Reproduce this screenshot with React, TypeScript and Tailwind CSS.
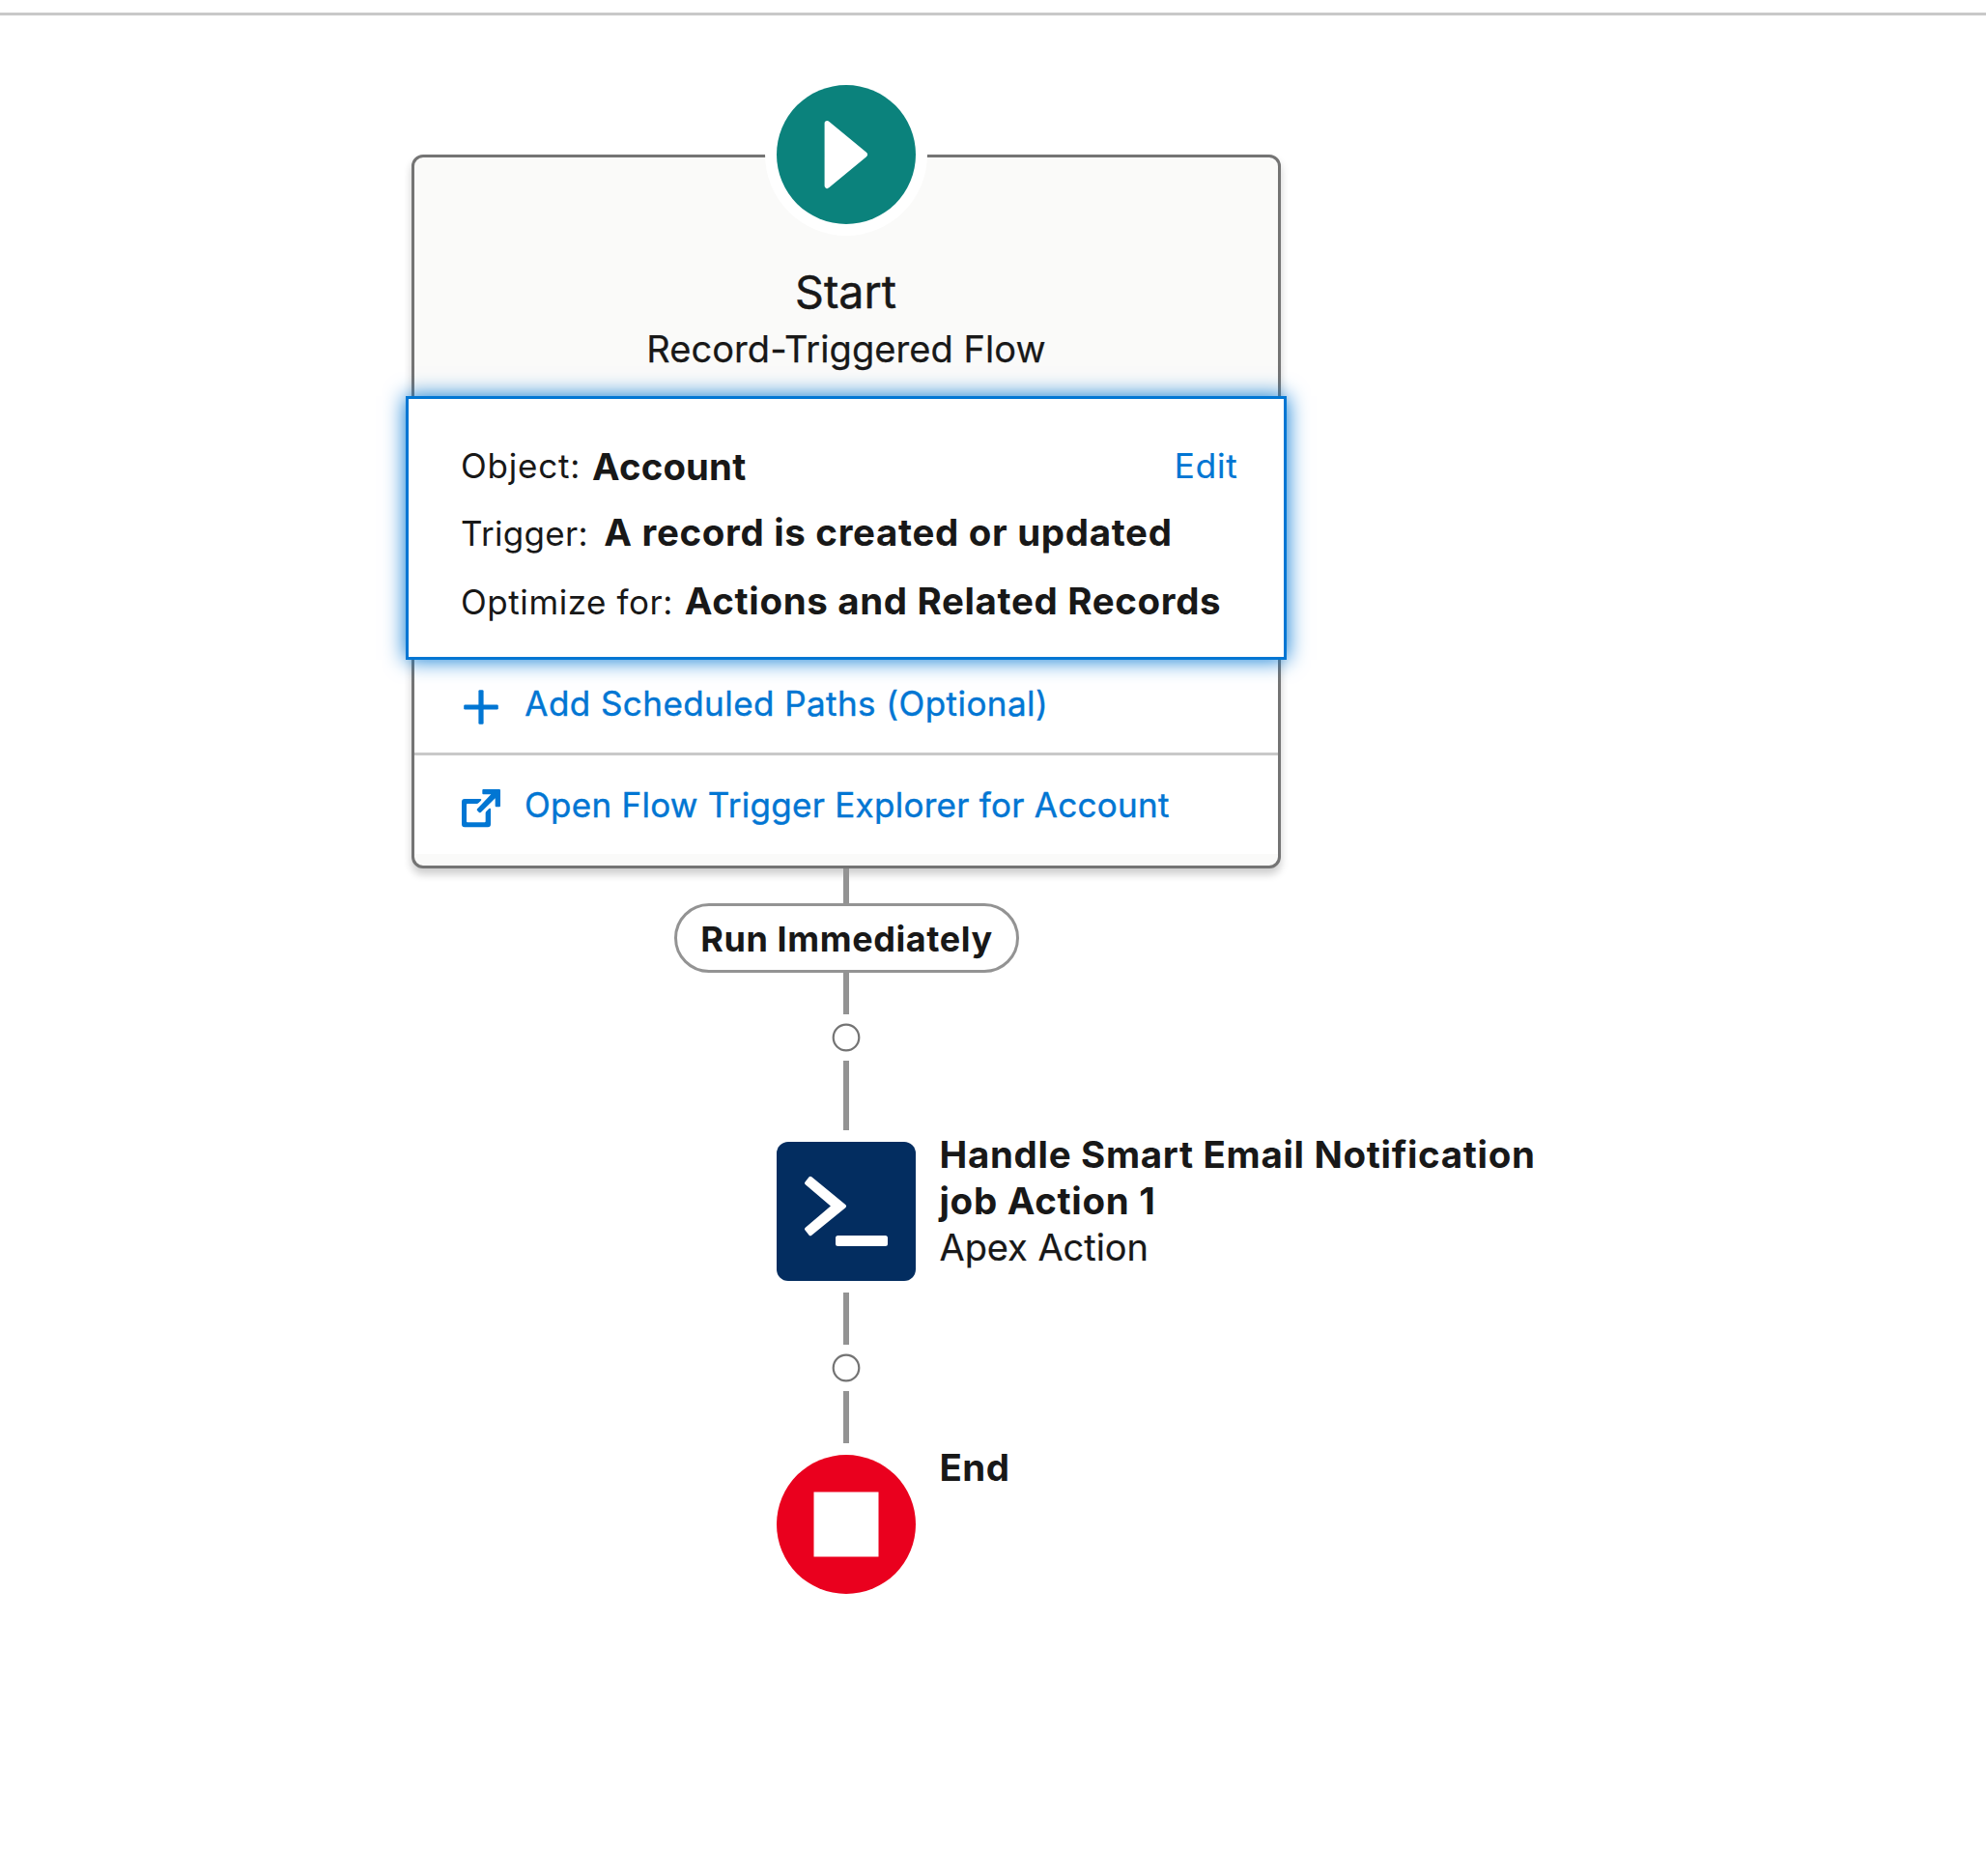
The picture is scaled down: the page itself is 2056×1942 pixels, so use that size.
import React from "react";

function Connector({ className }: { className: string }) {
  return <div className={`w-[6px] bg-[#939393] ${className}`} />;
}

function AddDot() {
  return (
    <svg className="block h-[48px] w-[48px]" viewBox="0 0 48 48">
      <circle cx="24" cy="24" r="13.3" fill="#fff" stroke="#747474" strokeWidth="2.2" />
    </svg>
  );
}

function PlayIcon() {
  return (
    <svg className="block h-[144px] w-[144px]" viewBox="0 0 144 144">
      <circle cx="72" cy="72" r="72" fill="#0b827c" />
      <path d="M52.4 39.8 91.2 72 52.4 104.2Z" fill="#fff" stroke="#fff" strokeWidth="5.6" strokeLinejoin="round" />
    </svg>
  );
}

function ApexIcon() {
  return (
    <svg className="block h-[144px] w-[144px]" viewBox="0 0 144 144">
      <rect width="144" height="144" rx="12" fill="#032d60" />
      <path
        d="M35 37.8 70 66.6 35 95.2 31.1 90.3 59 66.4 31.1 42.8Z"
        fill="#fff"
        stroke="#fff"
        strokeWidth="4"
        strokeLinejoin="round"
      />
      <rect x="61" y="97" width="54" height="11" rx="2.5" fill="#fff" />
    </svg>
  );
}

function StopIcon() {
  return (
    <svg className="block h-[144px] w-[144px]" viewBox="0 0 144 144">
      <circle cx="72" cy="72" r="72" fill="#ea001e" />
      <rect x="38.5" y="38.5" width="67" height="67" fill="#fff" />
    </svg>
  );
}

function PlusIcon() {
  return (
    <svg className="block h-[36px] w-[36px]" viewBox="0 0 36 36">
      <rect x="0.2" y="15.4" width="35.6" height="5.2" rx="1.4" fill="#0176d3" />
      <rect x="15.4" y="0.2" width="5.2" height="35.6" rx="1.4" fill="#0176d3" />
    </svg>
  );
}

function NewWindowIcon() {
  return (
    <svg className="block h-[40px] w-[40px]" viewBox="0 0 120 120" fill="#0176d3">
      <path d="M67 0H117Q120 0 120 3V52Q120 55 117 55H107Q104 55 104 52V28L60 71Q56 74 53 71L48 66Q46 63 49 60L91 16H67Q64 16 64 13V3Q64 0 67 0Z" />
      <path d="M9 30H58Q63 31 60 35L52 43Q50 45 47 45H18Q15 45 15 48V100Q15 103 18 103H71Q74 103 74 100V74Q74 71 76 69L85 60Q90 57 90 62V109Q90 118 81 118H9Q0 118 0 109V39Q0 30 9 30Z" />
    </svg>
  );
}

function StartCard() {
  return (
    <section className="mt-[144px] flex w-[900px] flex-col rounded-[12px] border-[3px] border-[#747474] bg-[#fafaf9] shadow-[0_6px_9px_rgba(0,0,0,0.2)]">
      <header className="flex h-[247px] flex-col items-center">
        <div className="-mt-[87px] flex h-[168px] w-[168px] items-center justify-center rounded-full bg-white">
          <PlayIcon />
        </div>
        <h1 className="mt-[25px] -ml-[1px] text-[46.5px] leading-[66px] [-webkit-text-stroke:0.5px]">Start</h1>
        <p className="mt-[2px] text-[38px] leading-[48px] tracking-[0.064px] [-webkit-text-stroke:0.25px]">
          Record-Triggered Flow
        </p>
      </header>

      <div className="relative -mx-[9px] flex h-[273px] flex-col border-[3px] border-[#0176d3] bg-white pt-[45px] pl-[54px] shadow-[0_0_21px_#0176d3]">
        <div className="flex items-start leading-[48px] whitespace-nowrap">
          <span className="w-[136px] text-[35px] tracking-[0.8px]">Object:</span>
          <strong className="mt-[1px] text-[38.3px] font-bold tracking-[0.2px]">Account</strong>
          <a className="mr-[47.3px] ml-auto text-[35px] tracking-[0.9px] text-[#0176d3] [-webkit-text-stroke:0.2px]">Edit</a>
        </div>
        <div className="mt-[20px] flex items-baseline leading-[48px] whitespace-nowrap">
          <span className="w-[148.3px] text-[35px] tracking-[0.297px]">Trigger:</span>
          <strong className="text-[38.5px] font-bold tracking-[0.666px]">A record is created or updated</strong>
        </div>
        <div className="mt-[22px] flex items-baseline leading-[48px] whitespace-nowrap">
          <span className="w-[231.8px] text-[35px] tracking-[0.574px]">Optimize for:</span>
          <strong className="text-[38.5px] font-bold tracking-[0.64px]">Actions and Related Records</strong>
        </div>
      </div>

      <div className="flex h-[99px] items-start border-b-[3px] border-[#c9c9c9] bg-white pl-[51px] text-[#0176d3]">
        <div className="mt-[31px] w-[63.3px]">
          <PlusIcon />
        </div>
        <a className="mt-[21px] text-[35px] leading-[48px] tracking-[0.443px] whitespace-nowrap [-webkit-text-stroke:0.4px]">
          Add Scheduled Paths (Optional)
        </a>
      </div>
      <div className="flex h-[102px] items-start bg-white pl-[49px] text-[#0176d3]">
        <div className="mt-[35px] w-[65px]">
          <NewWindowIcon />
        </div>
        <a className="mt-[27px] text-[35px] leading-[48px] tracking-[0.277px] whitespace-nowrap [-webkit-text-stroke:0.4px]">
          Open Flow Trigger Explorer for Account
        </a>
      </div>
      <div className="h-[12px] rounded-b-[9px]" />
    </section>
  );
}

export default function App() {
  return (
    <div className="min-h-[1942px] w-full bg-white font-['Inter',sans-serif] text-[#181818]">
      <div className="h-[16px] border-b-[3px] border-[#c9c9c9]" />
      <main className="ml-[426px] flex w-[900px] flex-col items-center">
        <StartCard />

        <Connector className="h-[36px]" />
        <div className="flex h-[72px] w-[357px] items-center justify-center rounded-full border-[3px] border-[#939393] bg-white">
          <span className="mt-[1px] ml-[1px] text-[36px] leading-[48px] font-bold tracking-[0.59px] whitespace-nowrap">
            Run Immediately
          </span>
        </div>
        <Connector className="h-[43px]" />
        <AddDot />
        <Connector className="h-[72px]" />

        <div className="my-[12px] ml-[378px] flex w-full gap-[24.5px] self-start">
          <ApexIcon />
          <div className="-mt-[11px] w-[640px] shrink-0 text-[38px] leading-[48px]">
            <strong className="block text-[38.5px] font-bold tracking-[0.68px]">
              Handle Smart Email Notification
              <br />
              job Action 1
            </strong>
            <p className="tracking-[-0.056px] [-webkit-text-stroke:0.2px]">Apex Action</p>
          </div>
        </div>

        <Connector className="h-[54px]" />
        <AddDot />
        <Connector className="h-[54px]" />

        <div className="mt-[12px] ml-[378px] flex gap-[24.5px] self-start">
          <StopIcon />
          <strong className="-mt-[11px] text-[38.5px] leading-[48px] font-bold tracking-[0.4px]">End</strong>
        </div>
      </main>
    </div>
  );
}
